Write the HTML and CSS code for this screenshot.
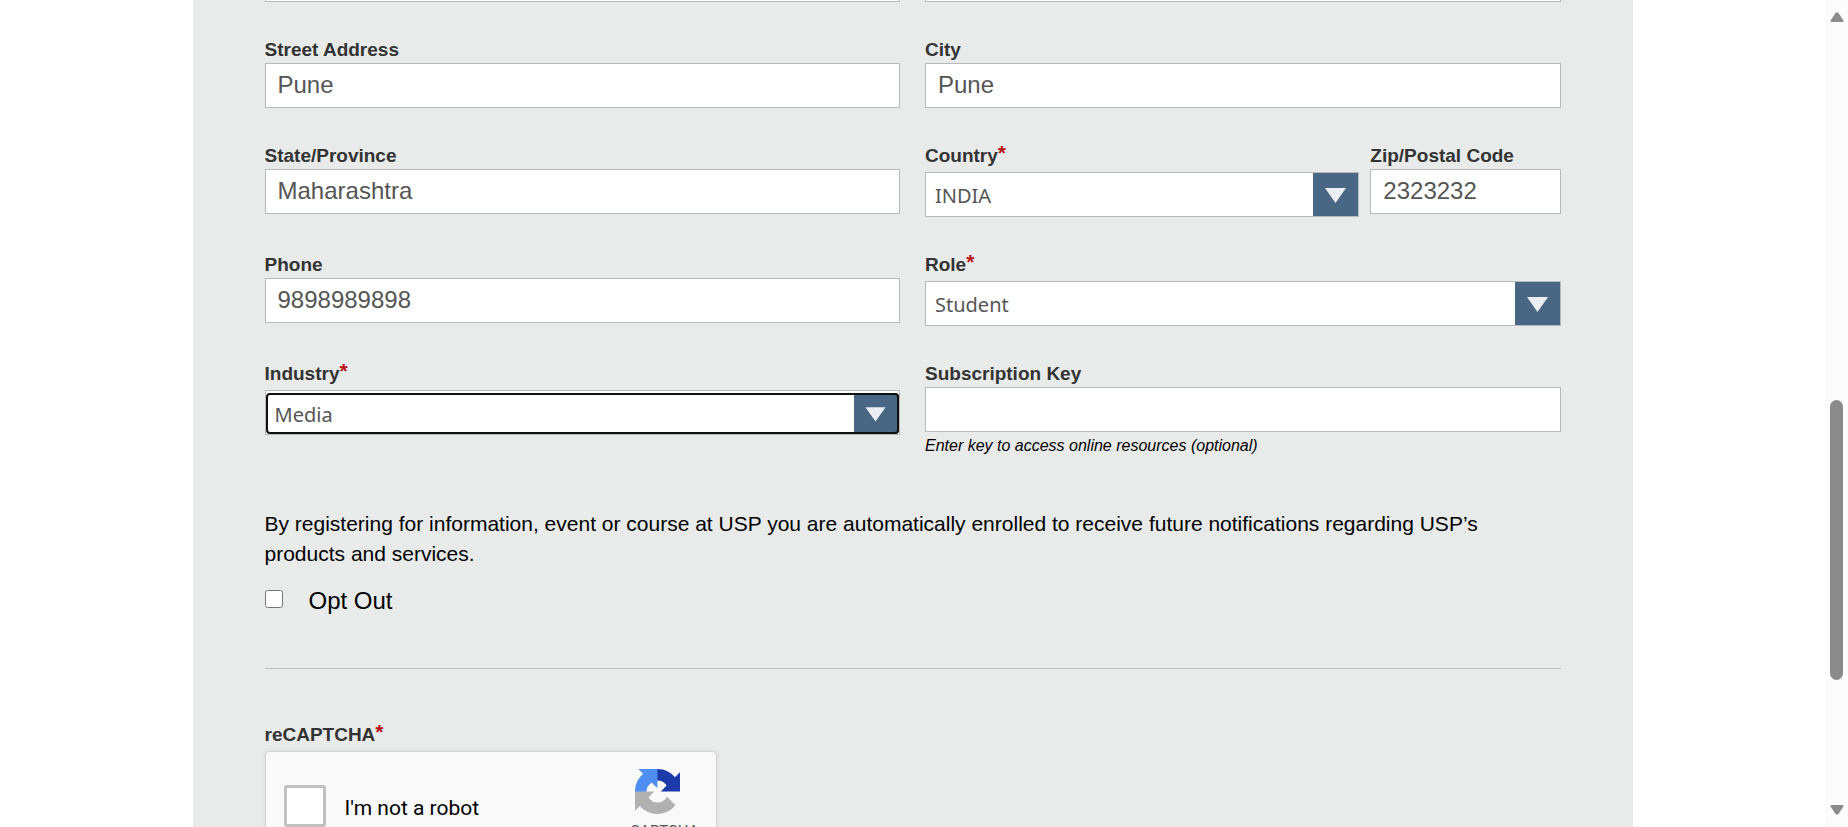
FILE: index.html
```html
<!DOCTYPE html>
<html lang="en">
<head>
<meta charset="utf-8">
<title>Registration</title>
<link rel="stylesheet" href="styles.css">
</head>
<body>
<div class="viewport">
  <main class="page">
    <form class="panel">
      <div class="row previous-row">
        <div class="field-end"></div>
        <div class="field-end"></div>
      </div>

      <div class="row">
        <div class="field">
          <label for="street">Street Address</label>
          <input class="text-box" id="street" type="text" value="Pune">
        </div>
        <div class="field">
          <label for="city">City</label>
          <input class="text-box" id="city" type="text" value="Pune">
        </div>
      </div>

      <div class="row">
        <div class="field">
          <label for="state">State/Province</label>
          <input class="text-box" id="state" type="text" value="Maharashtra">
        </div>
        <div class="country-zip">
          <div class="field">
            <label for="country">Country<span class="required">*</span></label>
            <div class="select-box">
              <select id="country"><option>INDIA</option></select>
              <svg class="arrow" viewBox="0 0 45 43" preserveAspectRatio="xMidYMid slice" aria-hidden="true"><path d="M12 15h21L22.500 30z"/></svg>
            </div>
          </div>
          <div class="field">
            <label for="zip">Zip/Postal Code</label>
            <input class="text-box" id="zip" type="text" value="2323232">
          </div>
        </div>
      </div>

      <div class="row">
        <div class="field">
          <label for="phone">Phone</label>
          <input class="text-box" id="phone" type="tel" value="9898989898">
        </div>
        <div class="field">
          <label for="role">Role<span class="required">*</span></label>
          <div class="select-box">
            <select id="role"><option>Student</option></select>
            <svg class="arrow" viewBox="0 0 45 43" preserveAspectRatio="xMidYMid slice" aria-hidden="true"><path d="M12 15h21L22.500 30z"/></svg>
          </div>
        </div>
      </div>

      <div class="row">
        <div class="field">
          <label for="industry">Industry<span class="required">*</span></label>
          <div class="select-box active">
            <select id="industry"><option>Media</option></select>
            <svg class="arrow" viewBox="0 0 45 43" preserveAspectRatio="xMidYMid slice" aria-hidden="true"><path d="M12 15h21L22.500 30z"/></svg>
          </div>
        </div>
        <div class="field">
          <label for="key">Subscription Key</label>
          <input class="text-box" id="key" type="text" aria-describedby="key-hint">
          <p class="hint" id="key-hint">Enter key to access online resources (optional)</p>
        </div>
      </div>

      <p class="notice">By registering for information, event or course at USP you are automatically enrolled to receive future notifications regarding USP’s products and services.</p>
      <div class="opt-out">
        <input type="checkbox" id="opt-out">
        <label for="opt-out">Opt Out</label>
      </div>

      <hr class="divider">

      <div class="field">
        <span class="group-label">reCAPTCHA<span class="required">*</span></span>
        <div class="captcha">
          <input type="checkbox" id="robot">
          <label for="robot">I'm not a robot</label>
          <div class="captcha-brand">
            <svg viewBox="0 0 64 64" aria-hidden="true">
              <path fill="#1c3aa9" d="M64 31.955l-.033-1.37V4.687l-7.16 7.16C50.948 4.674 42.033.093 32.05.093c-10.4 0-19.622 4.96-25.458 12.64l11.736 11.86a15.55 15.55 0 0 1 4.754-5.334c2.05-1.6 4.952-2.906 8.968-2.906.485 0 .86.057 1.135.163 4.976.393 9.288 3.14 11.828 7.124l-8.307 8.307L64 31.953"/>
              <path fill="#4d8ff5" d="M31.862.094l-1.37.033H4.594l7.16 7.16C4.58 13.147 0 22.06 0 32.046c0 10.4 4.96 19.622 12.64 25.458L24.5 45.768a15.55 15.55 0 0 1-5.334-4.754c-1.6-2.05-2.906-4.952-2.906-8.968 0-.485.057-.86.163-1.135.393-4.976 3.14-9.288 7.124-11.828l8.307 8.307L31.86.095"/>
              <path fill="#b1b1b1" d="M.001 32.045l.033 1.37v25.898l7.16-7.16c5.86 7.173 14.774 11.754 24.76 11.754 10.4 0 19.622-4.96 25.458-12.64l-11.736-11.86a15.55 15.55 0 0 1-4.754 5.334c-2.05 1.6-4.952 2.906-8.968 2.906-.485 0-.86-.057-1.135-.163-4.976-.393-9.288-3.14-11.828-7.124l8.307-8.307c-10.522.04-22.4.066-27.295-.005"/>
            </svg>
            <span>reCAPTCHA</span>
          </div>
        </div>
      </div>
    </form>
  </main>

  <div class="scrollbar" aria-hidden="true">
    <svg class="step" viewBox="0 0 14 10"><path d="M1.500 10Q0 10 .6 8.500L5.500 1Q7 -.6 8.500 1L13.400 8.500Q14 10 12.500 10z"/></svg>
    <div class="track"><div class="thumb"></div></div>
    <svg class="step" viewBox="0 0 14 10"><path d="M1.500 0Q0 0 .6 1.500L5.500 9Q7 10.600 8.500 9L13.400 1.500Q14 0 12.500 0z"/></svg>
  </div>
</div>
</body>
</html>
```
FILE: styles.css
```css
* {
  box-sizing: border-box;
}

body {
  margin: 0;
  background: #fff;
  color: #000;
  font-family: "Liberation Sans", Arial, sans-serif;
  font-size: 21px;
}

p {
  margin: 0;
}

.viewport {
  display: flex;
  height: 100vh;
  overflow: hidden;
}

.page {
  flex: 1;
  min-width: 0;
}

.panel {
  max-width: 1440px;
  min-height: 100%;
  margin: 0 auto;
  padding: 0 72px;
  background: #e8ebea;
}

.row {
  display: grid;
  grid-template-columns: 1fr 1fr;
  gap: 25px;
  margin-bottom: 38px;
}

.field-end {
  height: 2px;
  border: 1px solid #b7baba;
  border-top: 0;
  background: #fff;
}

.field {
  display: flex;
  flex-direction: column;
}

.field > label,
.group-label {
  height: 23px;
  color: #333;
  font-size: 19px;
  font-weight: 700;
  line-height: 19px;
}

.required {
  color: #b90e14;
  font-size: 21px;
  line-height: 12px;
  vertical-align: 2px;
}

.text-box {
  width: 100%;
  height: 45px;
  padding: 0 12px 2px;
  border: 1px solid #b7baba;
  border-radius: 0;
  background: #fff;
  color: #555;
  font: 24px "Liberation Sans", Arial, sans-serif;
}

.country-zip {
  display: grid;
  grid-template-columns: 434fr 190fr;
  gap: 11px;
}

.select-box {
  display: grid;
  height: 45px;
  margin-top: 3px;
  border: 1px solid #b7baba;
  background: #fff;
}

.select-box select,
.select-box .arrow {
  grid-area: 1 / 1;
}

.select-box select {
  width: 100%;
  height: 100%;
  padding: 2px 50px 0 9px;
  border: 0;
  background: #fff;
  color: #555;
  font: 20px "Trebuchet MS", "Noto Sans", sans-serif;
  appearance: none;
}

.select-box .arrow {
  justify-self: end;
  width: 45px;
  height: 100%;
  background: #496685;
  fill: #eceef3;
  pointer-events: none;
}

.select-box.active {
  padding-top: 2px;
}

.select-box.active select {
  padding: 2px 50px 0 7px;
  border: 2px solid #101010;
  border-radius: 4px;
}

.select-box.active .arrow {
  border: solid #101010;
  border-width: 2px 2px 2px 0;
  border-radius: 0 4px 4px 0;
}

.hint {
  padding-top: 3px;
  font-size: 16px;
  font-style: italic;
  line-height: 22px;
}

.notice {
  padding-top: 14px;
  line-height: 30px;
}

.opt-out {
  display: flex;
  align-items: center;
  gap: 26px;
  height: 30px;
  margin-top: 15px;
  font-size: 24px;
}

.opt-out input {
  width: 18px;
  height: 18px;
  margin: 0;
}

.opt-out label {
  padding-top: 3px;
}

.divider {
  height: 1px;
  margin: 54px 0 56px;
  border: 0;
  background: #b7bfc0;
}

.captcha {
  display: flex;
  align-items: center;
  width: 452px;
  height: 110px;
  margin-top: 3px;
  padding: 0 17px 0 18px;
  border: 1px solid #d3d3d3;
  border-radius: 4px;
  background: #f9f9f9;
  box-shadow: 0 0 5px rgba(0, 0, 0, 0.08);
  font-family: Roboto, sans-serif;
}

.captcha > input {
  width: 42px;
  height: 42px;
  margin: 0 19px 0 0;
  border: 3px solid #c1c1c1;
  border-radius: 3px;
  background: #fff;
  appearance: none;
}

.captcha > label {
  flex: 1;
  padding-top: 3px;
  font-size: 21px;
}

.captcha-brand {
  display: flex;
  flex-direction: column;
  align-items: center;
  align-self: flex-start;
  gap: 8px;
  padding-top: 17px;
  color: #555;
  font-size: 15px;
}

.captcha-brand svg {
  width: 45px;
  height: 45px;
}

.scrollbar {
  display: flex;
  flex-direction: column;
  align-items: center;
  width: 23px;
  padding: 12px 0;
  background: #fcfcfc;
}

.step {
  width: 14px;
  height: 10px;
  fill: #8b8b8b;
}

.track {
  display: grid;
  flex: 1;
  grid-template-rows: 378fr 280fr 125fr;
}

.thumb {
  grid-row: 2;
  width: 13px;
  border-radius: 7px;
  background: #8b8b8b;
}
```
